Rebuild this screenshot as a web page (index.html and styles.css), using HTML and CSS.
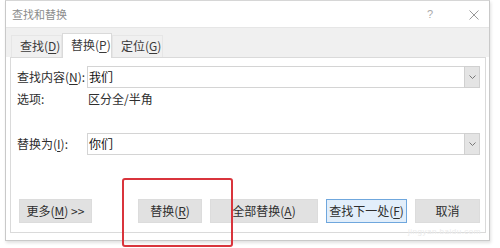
FILE: index.html
```html
<!DOCTYPE html>
<html>
	<head>
		<meta http-equiv="Content-Type" content="text/html; charset=utf-8">
		<title>查找和替换</title>
		<link rel="stylesheet" href="styles.css">
	</head>
	<body>
		<div class="dialog">
			<div class="titlebar">
				<span class="title">查找和替换</span>
				<span class="help">?</span>
				<span class="close">
					<svg width="10" height="10" viewBox="0 0 10 10"><path d="M0.5 0.5 L9.5 9.5 M9.5 0.5 L0.5 9.5" stroke="#999" stroke-width="1" fill="none"/></svg>
				</span>
			</div>

			<div class="tabs">
				<span class="tab">查找(<u>D</u>)</span>
				<span class="tab active">替换(<u>P</u>)</span>
				<span class="tab">定位(<u>G</u>)</span>
			</div>

			<div class="panel">
				<div class="row">
					<span class="label">查找内容(<u>N</u>):</span>
					<div class="combo">
						<span class="value">我们</span>
						<span class="drop">
							<svg width="7" height="4" viewBox="0 0 7 4"><path d="M0.5 0.5 L3.5 3.5 L6.5 0.5" stroke="#777" stroke-width="1" fill="none"/></svg>
						</span>
					</div>
				</div>

				<div class="row options">
					<span class="label">选项:</span>
					<span class="value">区分全/半角</span>
				</div>

				<div class="row replace">
					<span class="label">替换为(<u>I</u>):</span>
					<div class="combo">
						<span class="value">你们</span>
						<span class="drop">
							<svg width="7" height="4" viewBox="0 0 7 4"><path d="M0.5 0.5 L3.5 3.5 L6.5 0.5" stroke="#777" stroke-width="1" fill="none"/></svg>
						</span>
					</div>
				</div>

				<div class="buttons">
					<button class="btn more">更多(<u>M</u>) &gt;&gt;</button>
					<button class="btn replace-one">替换(<u>R</u>)</button>
					<button class="btn replace-all">全部替换(<u>A</u>)</button>
					<button class="btn find-next default">查找下一处(<u>F</u>)</button>
					<button class="btn cancel">取消</button>
				</div>
			</div>

			<div class="highlight"></div>
			<span class="watermark">jingyan.baidu.com</span>
		</div>
	</body>
</html>
```

FILE: styles.css
```css
* {
	margin: 0;
	padding: 0;
	box-sizing: border-box;
}

body {
	font: 12px/16px "Noto Sans CJK SC", "Liberation Sans", sans-serif;
	color: #2e2e2e;
	background: #fff;
	width: 500px;
	height: 248px;
	overflow: hidden;
}

u {
	text-decoration: underline;
	text-underline-offset: 2px;
}

.dialog {
	position: relative;
	margin-left: 5px;
	width: 485px;
	height: 241px;
	border: 1px solid #c9c9c9;
	border-top-color: #d6d6d6;
	background: #fff;
	box-shadow: 1px 2px 3px rgba(0, 0, 0, 0.12);
	padding-bottom: 7px;
}

/* title bar */

.titlebar {
	display: flex;
	align-items: center;
	height: 26px;
	padding-left: 6px;
	color: #8c8c8c;
}

.titlebar .title {
	font-size: 11px;
	flex: 1;
}

.titlebar .help {
	font: 11px "Liberation Sans", sans-serif;
	color: #aaa;
	width: 10px;
	margin-right: 32px;
}

.titlebar .close {
	display: flex;
	width: 10px;
	margin-right: 10px;
	margin-top: 1px;
}

/* tabs */

.tabs {
	display: flex;
	align-items: flex-end;
	height: 30px;
	background: #f0f0f0;
	padding-left: 5px;
	border-top: 1px solid #e6e6e6;
}

.tab {
	display: block;
	width: 51px;
	height: 22px;
	line-height: 20px;
	padding-left: 8px;
	color: #3a3a3a;
	border: 1px solid #e6e6e6;
	border-bottom: none;
	background: #f0f0f0;
}

.tab.active {
	width: 50px;
	height: 25px;
	line-height: 22px;
	padding-left: 8px;
	margin-bottom: -1px;
	background: #fff;
	border-color: #dadada;
	position: relative;
	z-index: 1;
}

/* panel */

.panel {
	margin: 0 3px 0 4px;
	height: 176px;
	border: 1px solid #dadada;
	background: #fff;
	padding: 8px 5px 9px 6px;
}

.row {
	display: flex;
	align-items: center;
	height: 22px;
}

.row .label {
	width: 70px;
	flex: none;
}

.row.options .value {
	padding-left: 1px;
}

.row.replace {
	margin-top: 23px;
}

.combo {
	flex: 1;
	display: flex;
	height: 22px;
	border: 1px solid #d4d4d4;
	background: #fff;
}

.combo .value {
	flex: 1;
	line-height: 19px;
	padding-left: 1px;
	color: #111;
}

.combo .drop {
	width: 16px;
	margin: -1px -1px -1px 0;
	background: #e4e4e4;
	border: 1px solid #d0d0d0;
	display: flex;
	align-items: center;
	justify-content: center;
}

/* buttons */

.buttons {
	display: flex;
	gap: 8px;
	margin-top: 44px;
	padding-left: 2px;
}

.btn {
	font: 12px/16px "Noto Sans CJK SC", "Liberation Sans", sans-serif;
	color: #2e2e2e;
	height: 24px;
	background: #e1e1e1;
	border: 1px solid #dcdcdc;
	padding: 0;
	text-align: center;
}

.btn.more {
	width: 73px;
	margin-right: 38px;
}

.btn.replace-one {
	width: 64px;
}

.btn.replace-all {
	width: 108px;
}

.btn.find-next {
	width: 81px;
}

.btn.cancel {
	width: 65px;
}

.btn.default {
	background: #e2eefa;
	border-color: #6fa7dd;
}

/* annotation over the screenshot */

.highlight {
	position: absolute;
	left: 116px;
	top: 177px;
	width: 111px;
	height: 69px;
	border: 2px solid #d9343c;
	border-radius: 3px;
}

.watermark {
	position: absolute;
	left: 402px;
	top: 226px;
	font: 8px "Liberation Sans", sans-serif;
	color: #ebebeb;
	letter-spacing: 0.5px;
}
```
